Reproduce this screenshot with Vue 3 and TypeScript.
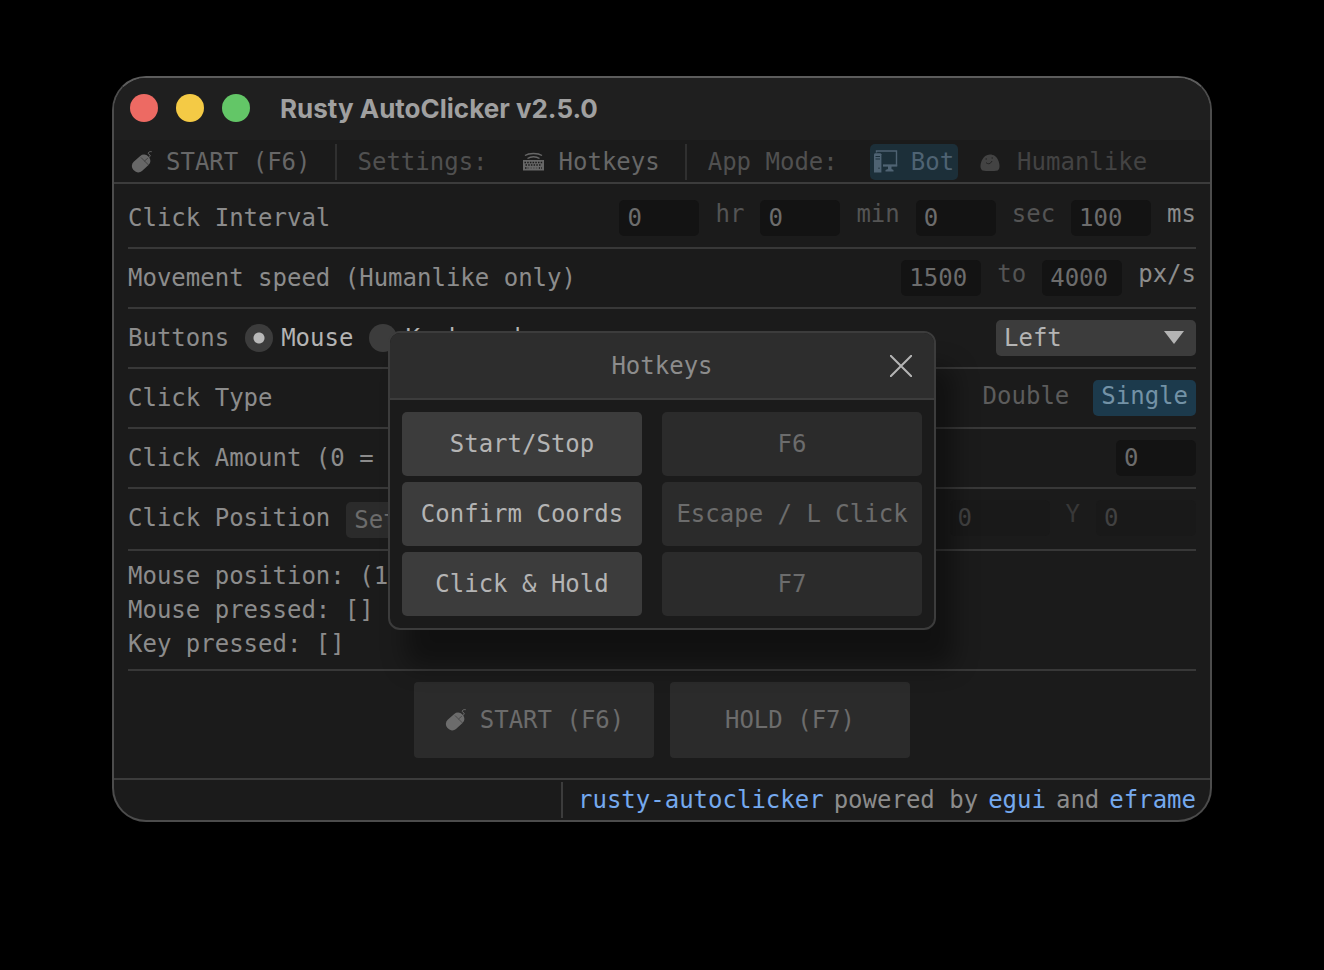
<script setup lang="ts">
import { ref } from 'vue'

interface Hotkey {
  action: string
  binding: string
}

interface Field {
  id: string
  value: string
  unit: string
}

const hotkeys: Hotkey[] = [
  { action: 'Start/Stop', binding: 'F6' },
  { action: 'Confirm Coords', binding: 'Escape / L Click' },
  { action: 'Click & Hold', binding: 'F7' },
]

const interval = ref<Field[]>([
  { id: 'hours', value: '0', unit: 'hr' },
  { id: 'minutes', value: '0', unit: 'min' },
  { id: 'seconds', value: '0', unit: 'sec' },
  { id: 'millis', value: '100', unit: 'ms' },
])

const speed = ref<Field[]>([
  { id: 'speed-min', value: '1500', unit: 'to' },
  { id: 'speed-max', value: '4000', unit: 'px/s' },
])

const device = ref('mouse')
const button = ref('Left')
const amount = ref('0')
const posX = ref('0')
const posY = ref('0')
const hotkeysOpen = ref(true)
</script>

<template>
  <main class="window">
    <header class="titlebar">
      <button class="light red" aria-label="Close window"></button>
      <button class="light yellow" aria-label="Minimize window"></button>
      <button class="light green" aria-label="Zoom window"></button>
      <h1>Rusty AutoClicker v2.5.0</h1>
    </header>

    <nav class="toolbar">
      <button class="tool start">
        <svg class="icon" viewBox="0 0 24 24" aria-hidden="true">
          <rect x="0.8" y="7.2" width="20" height="12.4" rx="5.6" fill="currentColor" transform="rotate(-42 11 13)" />
          <path d="M11 7.500 18.500 15M14.500 11l3.500-3" fill="none" stroke="#1b1b1b" stroke-width="0.5" />
          <path d="M17.800 8c2-1 3-2 2.200-3-1.500-.8-2.500-1.600-1.300-2.700 1-.8 2-.8 3-.6" fill="none" stroke="currentColor" stroke-width="1" />
        </svg>
        <span>START (F6)</span>
      </button>
      <span class="divider"></span>
      <span class="caption">Settings:</span>
      <button class="tool keys" @click="hotkeysOpen = true">
        <svg class="icon" viewBox="0 0 24 24" aria-hidden="true">
          <path d="M3 5.500C7 2.800 16 2.800 20 5.500M5.500 8.500C9 6 14 6 17.500 8.500" fill="none" stroke="currentColor" stroke-width="1.500" />
          <path d="M1 10h21v10.500H1z" fill="currentColor" />
          <path d="M2.500 12.500h18M3.500 15h16M3 18h17" fill="none" stroke="#1b1b1b" stroke-width="1.300" stroke-dasharray="1.500 1.200" />
          <path d="M6 18h11" stroke="currentColor" stroke-width="1.400" />
        </svg>
        <span>Hotkeys</span>
      </button>
      <span class="divider"></span>
      <span class="caption">App Mode:</span>
      <button class="tool bot" aria-pressed="true">
        <svg class="icon" viewBox="0 0 24 24" aria-hidden="true">
          <path d="M2.500 2.500V1h20v14.500H9" fill="none" stroke="currentColor" stroke-width="1.400" />
          <path d="M9 14.500h14.200v2H9zM14 16.500h3.500V19l2 1v1.500h-8V20l2.500-1z" fill="currentColor" />
          <path d="M.8 3.300h5.700l.9.900V22.500H0V4.200z" fill="currentColor" />
          <path d="M1.500 6.500h4.500M1.500 9h4.500M5 17.500v1.500" stroke="#1c303b" stroke-width="1" />
        </svg>
        <span>Bot</span>
      </button>
      <button class="tool human" aria-pressed="false">
        <svg class="icon" viewBox="0 0 24 24" aria-hidden="true">
          <path d="M3.500 20.500C1 19 1 14.500 2.800 10.500 4.500 6.500 7.500 4.500 11 4.500s7 2 8.500 6.500c1.500 4 1.500 8-.8 9.500-4 .8-11 .8-15.200 0z" fill="currentColor" />
          <path d="M6.500 9h1.500M12.500 8h1.500M7 12.500c2 2 4.500 1.500 6-1.500" fill="none" stroke="#222" stroke-width="1" />
        </svg>
        <span>Humanlike</span>
      </button>
    </nav>

    <div class="content">
      <section class="row first">
        <span class="label">Click Interval</span>
        <div class="controls">
          <template v-for="(f, i) in interval" :key="f.id">
            <input :id="f.id" v-model="f.value" class="field" type="text" />
            <label class="unit" :class="{ last: i === interval.length - 1 }" :for="f.id">{{ f.unit }}</label>
          </template>
        </div>
      </section>

      <section class="row">
        <span class="label">Movement speed (Humanlike only)</span>
        <div class="controls">
          <template v-for="(f, i) in speed" :key="f.id">
            <input :id="f.id" v-model="f.value" class="field" type="text" />
            <label class="unit" :class="{ last: i === speed.length - 1 }" :for="f.id">{{ f.unit }}</label>
          </template>
        </div>
      </section>

      <section class="row">
        <div class="group">
          <span class="label">Buttons</span>
          <label class="choice"><input v-model="device" type="radio" name="device" value="mouse" />Mouse</label>
          <label class="choice"><input v-model="device" type="radio" name="device" value="keyboard" />Keyboard</label>
        </div>
        <div class="picker">
          <select v-model="button" aria-label="Mouse button">
            <option>Left</option>
            <option>Middle</option>
            <option>Right</option>
          </select>
          <svg class="caret" viewBox="0 0 20 13" aria-hidden="true"><path d="M0 0h20L10 13z" fill="currentColor" /></svg>
        </div>
      </section>

      <section class="row">
        <span class="label">Click Type</span>
        <div class="controls">
          <button class="type" aria-pressed="false">Double</button>
          <button class="type active" aria-pressed="true">Single</button>
        </div>
      </section>

      <section class="row">
        <label class="label" for="amount">Click Amount (0 = infinite)</label>
        <input id="amount" v-model="amount" class="field" type="text" />
      </section>

      <section class="row position">
        <div class="group">
          <span class="label">Click Position</span>
          <button class="set">Set Coords</button>
        </div>
        <div class="controls off">
          <label class="unit" for="pos-x">X</label>
          <input id="pos-x" v-model="posX" class="field wide" type="text" disabled />
          <label class="unit" for="pos-y">Y</label>
          <input id="pos-y" v-model="posY" class="field wide" type="text" disabled />
        </div>
      </section>

      <section class="info">
        <p>Mouse position: (1024, 768)</p>
        <p>Mouse pressed: []</p>
        <p>Key pressed: []</p>
      </section>

      <section class="actions">
        <button class="action">
          <svg class="icon" viewBox="0 0 24 24" aria-hidden="true">
            <rect x="0.8" y="7.2" width="20" height="12.4" rx="5.6" fill="currentColor" transform="rotate(-42 11 13)" />
            <path d="M11 7.500 18.500 15M14.500 11l3.500-3" fill="none" stroke="#2b2b2b" stroke-width="0.5" />
            <path d="M17.800 8c2-1 3-2 2.200-3-1.500-.8-2.500-1.600-1.300-2.700 1-.8 2-.8 3-.6" fill="none" stroke="currentColor" stroke-width="1" />
          </svg>
          <span>START (F6)</span>
        </button>
        <button class="action">HOLD (F7)</button>
      </section>
    </div>

    <footer class="footer">
      <span class="divider"></span>
      <a href="#rusty-autoclicker">rusty-autoclicker</a>
      <span>powered by</span>
      <a href="#egui">egui</a>
      <span>and</span>
      <a href="#eframe">eframe</a>
    </footer>

    <section v-if="hotkeysOpen" class="dialog" role="dialog" aria-labelledby="dialog-title">
      <header class="dialog-head">
        <h2 id="dialog-title">Hotkeys</h2>
        <button class="close" aria-label="Close" @click="hotkeysOpen = false">
          <svg viewBox="0 0 22 22" aria-hidden="true"><path d="M0 0 22 22M22 0 0 22" stroke="currentColor" stroke-width="2" /></svg>
        </button>
      </header>
      <div class="bindings">
        <template v-for="h in hotkeys" :key="h.action">
          <button class="bind">{{ h.action }}</button>
          <button class="bind value" disabled>{{ h.binding }}</button>
        </template>
      </div>
    </section>
  </main>
</template>

<style>
body {
  margin: 0;
  background: #000;
}
</style>

<style scoped>
.window,
.window * {
  box-sizing: border-box;
}

.window {
  position: relative;
  margin: 76px 112px;
  border: 2px solid #4c4c4c;
  border-top-color: #5c5c5c;
  border-radius: 34px;
  background: #1b1b1b;
  color: #8c8c8c;
  font-family: "DejaVu Sans Mono", monospace;
  font-size: 24px;
  line-height: 28px;
  white-space: nowrap;
}

button,
input,
select {
  margin: 0;
  padding: 0;
  border: 0;
  background: none;
  color: inherit;
  font: inherit;
}

h1,
h2,
p {
  margin: 0;
}

.titlebar {
  display: flex;
  align-items: center;
  gap: 18px;
  height: 62px;
  padding: 0 16px 2px;
  border-radius: 32px 32px 0 0;
  background: #1f1f1f;
}

.light {
  width: 28px;
  height: 28px;
  border-radius: 50%;
}

.red {
  background: #ed6a63;
}

.yellow {
  background: #f4ca45;
}

.green {
  background: #63c667;
}

h1 {
  margin-left: 12px;
  padding-top: 2px;
  color: #a0a0a0;
  font: 700 26px/32px Inter, sans-serif;
}

.toolbar {
  display: flex;
  align-items: center;
  height: 44px;
  padding: 2px 16px 0;
  border-bottom: 2px solid #3c3c3c;
}

.icon {
  flex: none;
  width: 24px;
  height: 24px;
}

.tool {
  display: flex;
  align-items: center;
  gap: 12px;
  height: 36px;
  border-radius: 5px;
  color: #676767;
}

.divider {
  width: 2px;
  height: 36px;
  background: #303030;
}

.toolbar .divider {
  margin: 0 21px 0 25px;
}

.start {
  margin-right: -1px;
}

.caption {
  color: #505050;
}

.keys {
  margin-left: 34px;
  gap: 13px;
}

.bot {
  margin-left: 32px;
  padding: 0 4px;
  gap: 13px;
  background: #1c2f39;
  color: #4f6373;
}

.human {
  margin-left: 21px;
  gap: 14px;
  color: #434343;
}

.content {
  padding: 5px 14px 0;
}

.row {
  display: flex;
  justify-content: space-between;
  padding: 11px 0;
  border-bottom: 2px solid #383838;
}

.label {
  line-height: 36px;
}

.controls {
  display: flex;
  align-items: flex-start;
  gap: 16px;
}

.group {
  display: flex;
  gap: 16px;
}

.field {
  width: 80px;
  height: 36px;
  padding: 0 8px;
  border-radius: 5px;
  background: #131313;
  color: #6c6c6c;
}

.wide {
  width: 100px;
}

.unit {
  color: #545454;
}

.unit.last {
  color: #8c8c8c;
}

.off .unit {
  color: #383838;
}

.off .field {
  background: #191919;
  color: #414141;
}

.choice {
  display: flex;
  align-items: center;
  gap: 8px;
  color: #b4b4b4;
}

.choice input {
  appearance: none;
  width: 28px;
  height: 28px;
  border-radius: 50%;
  background: #3c3c3c;
}

.choice input:checked {
  background: radial-gradient(circle, #b8b8b8 5px, #3c3c3c 6px);
}

.picker {
  position: relative;
  width: 200px;
  height: 36px;
  color: #b4b4b4;
}

select {
  appearance: none;
  width: 100%;
  height: 36px;
  padding: 0 8px;
  border-radius: 5px;
  background: #3c3c3c;
}

.caret {
  position: absolute;
  top: 11px;
  right: 12px;
  width: 20px;
  height: 13px;
  pointer-events: none;
}

.type {
  height: 36px;
  padding: 0 8px 4px;
  border-radius: 5px;
  color: #5c5c5c;
}

.type.active {
  background: #1c3a4c;
  color: #7392a6;
}

.position .group {
  height: 38px;
}

.set {
  align-self: flex-end;
  height: 36px;
  padding: 0 8px;
  border-radius: 5px;
  background: #2b2b2b;
  color: #6c6c6c;
}

.info {
  padding: 8px 0;
  border-bottom: 2px solid #383838;
  line-height: 34px;
}

.actions {
  display: flex;
  justify-content: center;
  gap: 16px;
  padding: 11px 0 20px;
}

.action {
  display: flex;
  align-items: center;
  justify-content: center;
  gap: 12px;
  width: 240px;
  height: 76px;
  border-radius: 4px;
  background: #2b2b2b;
  color: #6c6c6c;
}

.footer {
  display: flex;
  align-items: center;
  justify-content: flex-end;
  gap: 10px;
  height: 42px;
  padding: 0 14px;
  border-top: 2px solid #3c3c3c;
}

.footer .divider {
  margin-right: 5px;
  background: #3c3c3c;
}

a {
  color: #75a9ee;
  text-decoration: none;
}

.dialog {
  position: absolute;
  top: 253px;
  left: 50%;
  border: 2px solid #3c3c3c;
  border-radius: 12px;
  background: #1b1b1b;
  box-shadow: 18px 36px 24px rgba(0, 0, 0, 0.38);
  transform: translateX(-50%);
}

.dialog-head {
  display: grid;
  grid-template-columns: 22px 1fr 22px;
  align-items: center;
  height: 67px;
  padding: 0 22px;
  border-bottom: 2px solid #3c3c3c;
  border-radius: 10px 10px 0 0;
  background: #2d2d2d;
}

h2 {
  grid-column: 2;
  color: #8c8c8c;
  font-size: 24px;
  font-weight: 400;
  line-height: 28px;
  text-align: center;
}

.close {
  width: 22px;
  height: 22px;
  color: #b4b4b4;
}

.close svg {
  display: block;
}

.bindings {
  display: grid;
  grid-template-columns: 240px 260px;
  gap: 6px 20px;
  padding: 12px;
}

.bind {
  height: 64px;
  border-radius: 5px;
  background: #3c3c3c;
  color: #b4b4b4;
}

.bind.value {
  background: #2b2b2b;
  color: #6c6c6c;
}
</style>
